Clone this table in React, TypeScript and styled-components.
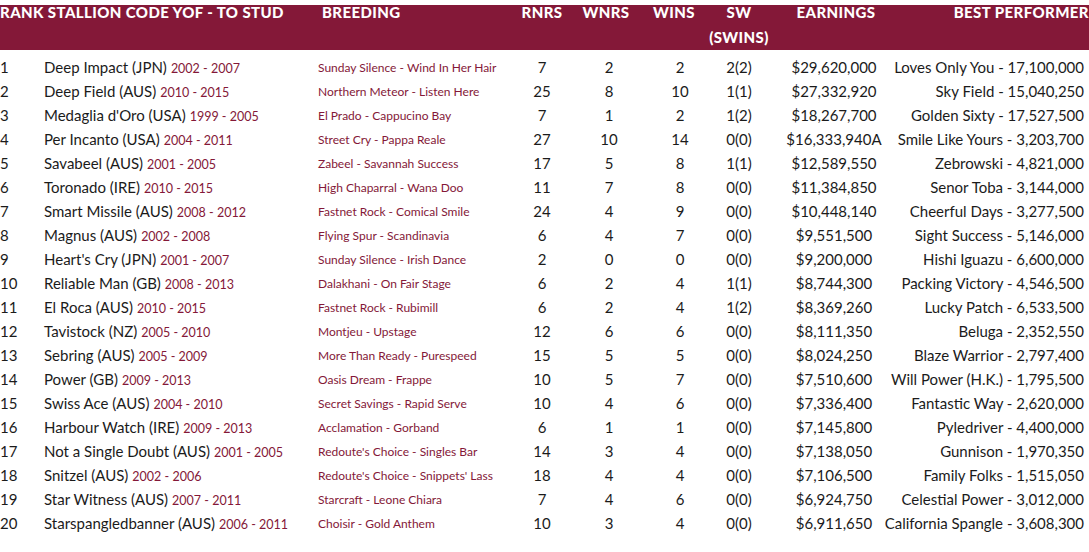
import React from 'react';
import styled, {createGlobalStyle} from 'styled-components';

const GlobalStyle = createGlobalStyle`
  html, body {
    margin: 0;
    padding: 0;
    background: #ffffff;
  }
  body {
    font-family: Lato, "Open Sans", Arial, sans-serif;
    color: #1b1b1b;
  }
`;

const maroon = '#841838';
const cols = '44px 274px 194px 60px 74px 68px 50px 140px 1fr';

type Stallion = {
  name: string;
  years: string;
  breeding: string;
  rnrs: number;
  wnrs: number;
  wins: number;
  sw: string;
  earnings: string;
  best: string;
};

const rows: Stallion[] = [
  {name: 'Deep Impact (JPN)', years: '2002 - 2007', breeding: 'Sunday Silence - Wind In Her Hair', rnrs: 7, wnrs: 2, wins: 2, sw: '2(2)', earnings: '$29,620,000', best: 'Loves Only You - 17,100,000'},
  {name: 'Deep Field (AUS)', years: '2010 - 2015', breeding: 'Northern Meteor - Listen Here', rnrs: 25, wnrs: 8, wins: 10, sw: '1(1)', earnings: '$27,332,920', best: 'Sky Field - 15,040,250'},
  {name: "Medaglia d'Oro (USA)", years: '1999 - 2005', breeding: 'El Prado - Cappucino Bay', rnrs: 7, wnrs: 1, wins: 2, sw: '1(2)', earnings: '$18,267,700', best: 'Golden Sixty - 17,527,500'},
  {name: 'Per Incanto (USA)', years: '2004 - 2011', breeding: 'Street Cry - Pappa Reale', rnrs: 27, wnrs: 10, wins: 14, sw: '0(0)', earnings: '$16,333,940A', best: 'Smile Like Yours - 3,203,700'},
  {name: 'Savabeel (AUS)', years: '2001 - 2005', breeding: 'Zabeel - Savannah Success', rnrs: 17, wnrs: 5, wins: 8, sw: '1(1)', earnings: '$12,589,550', best: 'Zebrowski - 4,821,000'},
  {name: 'Toronado (IRE)', years: '2010 - 2015', breeding: 'High Chaparral - Wana Doo', rnrs: 11, wnrs: 7, wins: 8, sw: '0(0)', earnings: '$11,384,850', best: 'Senor Toba - 3,144,000'},
  {name: 'Smart Missile (AUS)', years: '2008 - 2012', breeding: 'Fastnet Rock - Comical Smile', rnrs: 24, wnrs: 4, wins: 9, sw: '0(0)', earnings: '$10,448,140', best: 'Cheerful Days - 3,277,500'},
  {name: 'Magnus (AUS)', years: '2002 - 2008', breeding: 'Flying Spur - Scandinavia', rnrs: 6, wnrs: 4, wins: 7, sw: '0(0)', earnings: '$9,551,500', best: 'Sight Success - 5,146,000'},
  {name: "Heart's Cry (JPN)", years: '2001 - 2007', breeding: 'Sunday Silence - Irish Dance', rnrs: 2, wnrs: 0, wins: 0, sw: '0(0)', earnings: '$9,200,000', best: 'Hishi Iguazu - 6,600,000'},
  {name: 'Reliable Man (GB)', years: '2008 - 2013', breeding: 'Dalakhani - On Fair Stage', rnrs: 6, wnrs: 2, wins: 4, sw: '1(1)', earnings: '$8,744,300', best: 'Packing Victory - 4,546,500'},
  {name: 'El Roca (AUS)', years: '2010 - 2015', breeding: 'Fastnet Rock - Rubimill', rnrs: 6, wnrs: 2, wins: 4, sw: '1(2)', earnings: '$8,369,260', best: 'Lucky Patch - 6,533,500'},
  {name: 'Tavistock (NZ)', years: '2005 - 2010', breeding: 'Montjeu - Upstage', rnrs: 12, wnrs: 6, wins: 6, sw: '0(0)', earnings: '$8,111,350', best: 'Beluga - 2,352,550'},
  {name: 'Sebring (AUS)', years: '2005 - 2009', breeding: 'More Than Ready - Purespeed', rnrs: 15, wnrs: 5, wins: 5, sw: '0(0)', earnings: '$8,024,250', best: 'Blaze Warrior - 2,797,400'},
  {name: 'Power (GB)', years: '2009 - 2013', breeding: 'Oasis Dream - Frappe', rnrs: 10, wnrs: 5, wins: 7, sw: '0(0)', earnings: '$7,510,600', best: 'Will Power (H.K.) - 1,795,500'},
  {name: 'Swiss Ace (AUS)', years: '2004 - 2010', breeding: 'Secret Savings - Rapid Serve', rnrs: 10, wnrs: 4, wins: 6, sw: '0(0)', earnings: '$7,336,400', best: 'Fantastic Way - 2,620,000'},
  {name: 'Harbour Watch (IRE)', years: '2009 - 2013', breeding: 'Acclamation - Gorband', rnrs: 6, wnrs: 1, wins: 1, sw: '0(0)', earnings: '$7,145,800', best: 'Pyledriver - 4,400,000'},
  {name: 'Not a Single Doubt (AUS)', years: '2001 - 2005', breeding: "Redoute's Choice - Singles Bar", rnrs: 14, wnrs: 3, wins: 4, sw: '0(0)', earnings: '$7,138,050', best: 'Gunnison - 1,970,350'},
  {name: 'Snitzel (AUS)', years: '2002 - 2006', breeding: "Redoute's Choice - Snippets' Lass", rnrs: 18, wnrs: 4, wins: 4, sw: '0(0)', earnings: '$7,106,500', best: 'Family Folks - 1,515,050'},
  {name: 'Star Witness (AUS)', years: '2007 - 2011', breeding: 'Starcraft - Leone Chiara', rnrs: 7, wnrs: 4, wins: 6, sw: '0(0)', earnings: '$6,924,750', best: 'Celestial Power - 3,012,000'},
  {name: 'Starspangledbanner (AUS)', years: '2006 - 2011', breeding: 'Choisir - Gold Anthem', rnrs: 10, wnrs: 3, wins: 4, sw: '0(0)', earnings: '$6,911,650', best: 'California Spangle - 3,608,300'},
];

const Page = styled.div`
  width: 1089px;
  overflow: hidden;
`;

const HeaderBar = styled.div`
  display: grid;
  grid-template-columns: ${cols};
  height: 50px;
  background: linear-gradient(to bottom, #ffffff 0 5px, ${maroon} 5px);
  color: #ffffff;
  font-weight: 900;
  font-size: 15px;
  line-height: 25px;
  text-transform: uppercase;
  white-space: nowrap;
  letter-spacing: 0.4px;
`;

const HeadCell = styled.div<{align?: 'left' | 'center' | 'right'; shift?: number; span?: number}>`
  grid-column: span ${({span}) => span ?? 1};
  display: flex;
  flex-direction: column;
  align-items: ${({align}) => align === 'right' ? 'flex-end' : align === 'center' ? 'center' : 'flex-start'};
  padding-left: ${({shift}) => shift && shift > 0 ? shift : 0}px;
  padding-right: ${({shift}) => shift && shift < 0 ? -shift : 0}px;
`;

const Body = styled.div`
  margin-top: 5px;
`;

const Row = styled.div`
  display: grid;
  grid-template-columns: ${cols};
  height: 24px;
  align-items: center;
  font-size: 15px;
  white-space: nowrap;
`;

const Cell = styled.div<{align?: 'left' | 'center' | 'right'; pad?: number}>`
  display: flex;
  align-items: baseline;
  justify-content: ${({align}) => align === 'right' ? 'flex-end' : align === 'center' ? 'center' : 'flex-start'};
  padding-right: ${({pad}) => pad ?? 0}px;
  min-width: 0;
`;

const Years = styled.span`
  color: ${maroon};
  font-size: 12.5px;
  margin-left: 4px;
`;

const Breeding = styled.span`
  color: ${maroon};
  font-size: 12px;
`;

export default function App() {
  return (
    <Page>
      <GlobalStyle />
      <HeaderBar>
        <HeadCell span={2}>Rank Stallion Code YOF - To Stud</HeadCell>
        <HeadCell shift={4}>Breeding</HeadCell>
        <HeadCell align="center">Rnrs</HeadCell>
        <HeadCell align="center" shift={-6}>Wnrs</HeadCell>
        <HeadCell align="center" shift={-12}>Wins</HeadCell>
        <HeadCell align="center">
          <span>SW</span>
          <span>(Swins)</span>
        </HeadCell>
        <HeadCell align="center" shift={4}>Earnings</HeadCell>
        <HeadCell align="right">Best Performer</HeadCell>
      </HeaderBar>
      <Body>
        {rows.map((r, i) => (
          <Row key={r.name}>
            <Cell>{i + 1}</Cell>
            <Cell>
              {r.name}
              <Years>{r.years}</Years>
            </Cell>
            <Cell>
              <Breeding>{r.breeding}</Breeding>
            </Cell>
            <Cell align="center">{r.rnrs}</Cell>
            <Cell align="center">{r.wnrs}</Cell>
            <Cell align="center">{r.wins}</Cell>
            <Cell align="center">{r.sw}</Cell>
            <Cell align="center">{r.earnings}</Cell>
            <Cell align="right" pad={5}>{r.best}</Cell>
          </Row>
        ))}
      </Body>
    </Page>
  );
}
